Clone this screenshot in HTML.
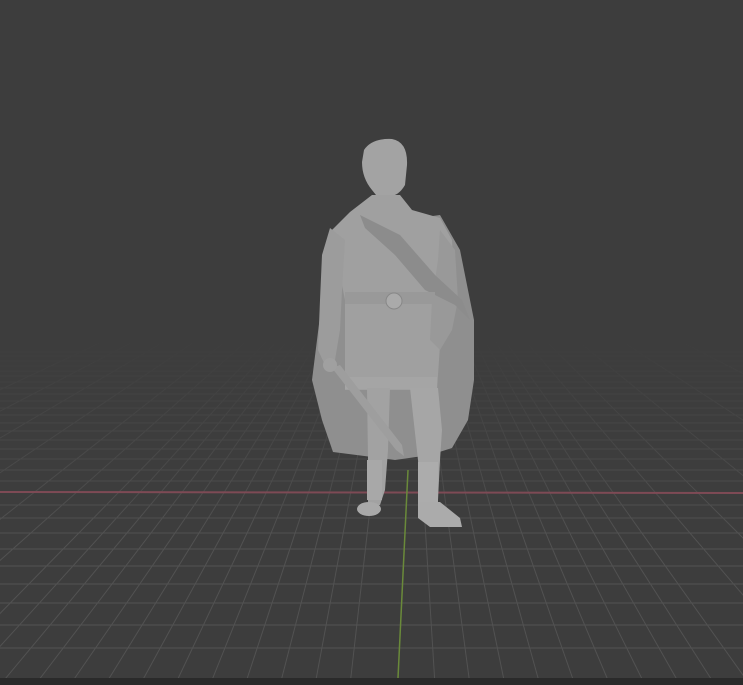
<!DOCTYPE html>
<html><head><meta charset="utf-8"><style>
html,body{margin:0;padding:0;background:#3d3d3d;width:743px;height:685px;overflow:hidden}
svg{display:block}
</style></head><body>
<svg width="743" height="685" viewBox="0 0 743 685" xmlns="http://www.w3.org/2000/svg">
<defs>
<linearGradient id="fade" x1="0" y1="0" x2="0" y2="1">
<stop offset="0" stop-color="#3d3d3d" stop-opacity="1"/>
<stop offset="0.5" stop-color="#3d3d3d" stop-opacity="0.5"/>
<stop offset="1" stop-color="#3d3d3d" stop-opacity="0"/>
</linearGradient>
<linearGradient id="body" x1="0" y1="0" x2="1" y2="0">
<stop offset="0" stop-color="#8e8e8e"/>
<stop offset="0.5" stop-color="#a9a9a9"/>
<stop offset="1" stop-color="#8a8a8a"/>
</linearGradient>
</defs>
<rect width="743" height="685" fill="#3d3d3d"/>
<g stroke="#525252" stroke-width="1">
<line x1="0" y1="648" x2="743" y2="648"/>
<line x1="0" y1="625" x2="743" y2="625"/>
<line x1="0" y1="603" x2="743" y2="603"/>
<line x1="0" y1="584" x2="743" y2="584"/>
<line x1="0" y1="566" x2="743" y2="566"/>
<line x1="0" y1="549" x2="743" y2="549"/>
<line x1="0" y1="533" x2="743" y2="533"/>
<line x1="0" y1="518" x2="743" y2="518"/>
<line x1="0" y1="505" x2="743" y2="505"/>
<line x1="0" y1="481" x2="743" y2="481"/>
<line x1="0" y1="470" x2="743" y2="470"/>
<line x1="0" y1="459" x2="743" y2="459"/>
<line x1="0" y1="449" x2="743" y2="449"/>
<line x1="0" y1="440" x2="743" y2="440"/>
<line x1="0" y1="431" x2="743" y2="431"/>
<line x1="0" y1="423" x2="743" y2="423"/>
<line x1="0" y1="415" x2="743" y2="415"/>
<line x1="0" y1="408" x2="743" y2="408"/>
<line x1="0" y1="401" x2="743" y2="401"/>
<line x1="0" y1="394" x2="743" y2="394"/>
<line x1="0" y1="388" x2="743" y2="388"/>
<line x1="0" y1="382" x2="743" y2="382"/>
<line x1="0" y1="376" x2="743" y2="376"/>
<line x1="0" y1="371" x2="743" y2="371"/>
<line x1="0" y1="366" x2="743" y2="366"/>
<line x1="0" y1="361" x2="743" y2="361"/>
<line x1="0" y1="356" x2="743" y2="356"/>
<line x1="0" y1="352" x2="743" y2="352"/>
</g>
<g stroke="#525252" stroke-width="1">
<line x1="-630" y1="685" x2="405" y2="200"/>
<line x1="-525" y1="685" x2="405" y2="200"/>
<line x1="-420" y1="685" x2="405" y2="200"/>
<line x1="-315" y1="685" x2="405" y2="200"/>
<line x1="-210" y1="685" x2="405" y2="200"/>
<line x1="-140" y1="685" x2="405" y2="200"/>
<line x1="-70" y1="685" x2="405" y2="200"/>
<line x1="-35" y1="685" x2="405" y2="200"/>
<line x1="0" y1="685" x2="405" y2="200"/>
<line x1="35" y1="685" x2="405" y2="200"/>
<line x1="70" y1="685" x2="405" y2="200"/>
<line x1="105" y1="685" x2="405" y2="200"/>
<line x1="140" y1="685" x2="405" y2="200"/>
<line x1="175" y1="685" x2="405" y2="200"/>
<line x1="210" y1="685" x2="405" y2="200"/>
<line x1="245" y1="685" x2="405" y2="200"/>
<line x1="280" y1="685" x2="405" y2="200"/>
<line x1="315" y1="685" x2="405" y2="200"/>
<line x1="350" y1="685" x2="405" y2="200"/>
<line x1="435" y1="685" x2="405" y2="200"/>
<line x1="470" y1="685" x2="405" y2="200"/>
<line x1="505" y1="685" x2="405" y2="200"/>
<line x1="540" y1="685" x2="405" y2="200"/>
<line x1="575" y1="685" x2="405" y2="200"/>
<line x1="610" y1="685" x2="405" y2="200"/>
<line x1="645" y1="685" x2="405" y2="200"/>
<line x1="680" y1="685" x2="405" y2="200"/>
<line x1="715" y1="685" x2="405" y2="200"/>
<line x1="750" y1="685" x2="405" y2="200"/>
<line x1="820" y1="685" x2="405" y2="200"/>
<line x1="890" y1="685" x2="405" y2="200"/>
<line x1="1000" y1="685" x2="405" y2="200"/>
<line x1="1150" y1="685" x2="405" y2="200"/>
<line x1="1350" y1="685" x2="405" y2="200"/>
</g>
<rect x="0" y="340" width="743" height="200" fill="url(#fade)"/>
<rect x="0" y="0" width="743" height="342" fill="#3d3d3d"/>
<line x1="0" y1="492" x2="743" y2="493" stroke="#7e4a55" stroke-width="2"/>
<line x1="408" y1="470" x2="398" y2="678" stroke="#6a8a3a" stroke-width="1.5"/>
<g fill="url(#body)">
<path d="M330 230 L322 300 L312 380 L322 420 L333 452 L380 458 L395 460 L430 455 L452 448 L468 420 L474 380 L474 320 L460 250 L440 215 Z" fill="#8f8f8f"/>
<path d="M364 150 Q372 138 392 139 Q408 142 407 165 L405 185 Q398 197 388 196 L380 200 L372 190 Q362 178 362 162 Z" fill="#a3a3a3"/>
<path d="M372 195 L400 195 L412 210 L440 218 L452 240 L455 300 L450 330 L440 345 L437 390 L345 390 L345 300 L336 255 L330 232 L350 212 Z" fill="#a0a0a0"/>
<path d="M330 228 L345 240 L342 290 L340 330 L335 360 L325 365 L318 350 L320 300 L322 255 Z" fill="#9c9c9c"/>
<path d="M440 230 L455 250 L458 300 L452 330 L440 350 L430 340 L432 300 L438 260 Z" fill="#999"/>
<path d="M360 215 L400 235 L435 275 L462 300 L470 320 L455 305 L425 290 L395 255 L365 228 Z" fill="#8c8c8c"/>
<rect x="345" y="292" width="90" height="12" fill="#999"/>
<circle cx="394" cy="301" r="8" fill="#aaa" stroke="#888"/>
<rect x="345" y="377" width="92" height="12" fill="#a5a5a5"/>
<path d="M367 388 L390 388 L388 450 L385 490 L380 505 L368 505 L368 460 Z" fill="#a2a2a2"/>
<path d="M410 388 L438 388 L442 430 L440 460 L438 500 L420 505 L418 460 Z" fill="#a6a6a6"/>
<rect x="367" y="460" width="15" height="40" fill="#a8a8a8"/>
<rect x="418" y="462" width="20" height="42" fill="#acacac"/>
<ellipse cx="369" cy="509" rx="12" ry="7" fill="#a9a9a9"/>
<path d="M418 502 L440 502 L460 518 L462 527 L430 527 L418 518 Z" fill="#ababab"/>
<path d="M332 368 L340 365 L402 445 L404 456 L396 450 Z" fill="#9e9e9e"/>
<circle cx="330" cy="365" r="7" fill="#a0a0a0"/>
</g>
<rect x="0" y="678" width="743" height="7" fill="#2a2a2a"/>
</svg>
</body></html>
